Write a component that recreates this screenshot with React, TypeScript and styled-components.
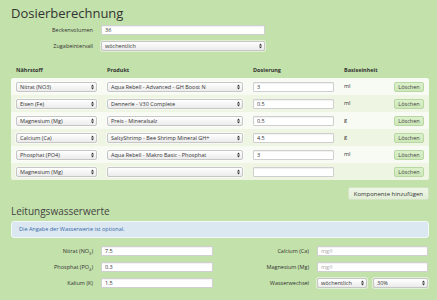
import React from "react";
import styled, { createGlobalStyle } from "styled-components";

const Global = createGlobalStyle`
  html, body { margin: 0; padding: 0; background: #c3e1ab; }
  body { font-family: "Open Sans", "DejaVu Sans", sans-serif; color: #333; font-size: 6px; line-height: 1.2; }
  * { box-sizing: border-box; }
`;

const Page = styled.div`
  width: 437px;
  height: 300px;
  padding: 4px 8px 0 11px;
  background: #c3e1ab;
  overflow: hidden;
`;

const Title = styled.h1`
  margin: 0 0 2px 0;
  font-size: 13px;
  font-weight: 400;
  line-height: 19px;
  color: #333;
`;

const FormGrid = styled.div`
  display: grid;
  grid-template-columns: 82px 164px;
  grid-auto-rows: 10px;
  column-gap: 8px;
  row-gap: 6px;
  align-items: center;
`;

const Label = styled.label`
  font-size: 5.5px;
  line-height: 7px;
  color: #333;
  text-align: right;
`;

const Input = styled.input<{ $w?: number }>`
  display: block;
  height: 10px;
  width: ${(p) => (p.$w ? `${p.$w}px` : "100%")};
  border: 1px solid #cfcfcf;
  border-radius: 1px;
  background: #fff;
  box-shadow: inset 0 1px 1px rgba(0, 0, 0, 0.06);
  font-family: inherit;
  font-size: 5.5px;
  color: #333;
  padding: 0 3px;
  margin: 0;
  outline: none;
  &::placeholder { color: #aaa; }
`;

const SelectWrap = styled.div<{ $w?: number }>`
  position: relative;
  width: ${(p) => (p.$w ? `${p.$w}px` : "100%")};
  height: 10px;
`;

const SelectBox = styled.select`
  display: block;
  appearance: none;
  -webkit-appearance: none;
  width: 100%;
  height: 10px;
  margin: 0;
  border: 1px solid #c6c6c6;
  border-radius: 2px;
  background: linear-gradient(#ffffff, #ebebeb);
  box-shadow: 0 0 0 1px rgba(255, 255, 255, 0.5);
  font-family: inherit;
  font-size: 5.5px;
  color: #333;
  padding: 0 3px;
  line-height: 8px;
  outline: none;
`;

const Arrows = styled.svg`
  position: absolute;
  right: 3px;
  top: 2px;
  width: 3px;
  height: 6px;
  pointer-events: none;
`;

function Select({ value, w }: { value: string; w?: number }) {
  return (
    <SelectWrap $w={w}>
      <SelectBox defaultValue={value}>
        <option value={value}>{value}</option>
      </SelectBox>
      <Arrows viewBox="0 0 3 6">
        <path d="M0 2.4 L1.5 0.4 L3 2.4 Z M0 3.6 L1.5 5.6 L3 3.6 Z" fill="#333" />
      </Arrows>
    </SelectWrap>
  );
}

const TableHead = styled.div`
  display: grid;
  grid-template-columns: 81px 136px 81px 40px 30px;
  column-gap: 10px;
  padding: 0 5px;
  margin-top: 15px;
  height: 9px;
  align-items: center;
  font-size: 5.5px;
  font-weight: 700;
  color: #333;
`;

const Panel = styled.div`
  margin-top: 3px;
  width: 418px;
  background: #f8fbf3;
  border-radius: 3px;
  overflow: hidden;
`;

const Row = styled.div<{ $alt?: boolean }>`
  display: grid;
  grid-template-columns: 81px 136px 81px 40px 30px;
  column-gap: 10px;
  padding: 0 5px;
  height: 17px;
  align-items: center;
  background: ${(p) => (p.$alt ? "#eef5e3" : "#f8fbf3")};
`;

const Unit = styled.span`
  font-size: 5.5px;
  color: #333;
`;

const SmallButton = styled.button`
  display: block;
  height: 10px;
  width: 30px;
  padding: 0;
  border: 1px solid #b9d7a3;
  border-radius: 2px;
  background: linear-gradient(#dcf1cc, #cde8b8);
  font-family: inherit;
  font-size: 5.5px;
  color: #444;
`;

const Actions = styled.div`
  display: flex;
  justify-content: flex-end;
  width: 418px;
  margin-top: 7px;
`;

const AddButton = styled.button`
  display: block;
  height: 13px;
  padding: 0 5px;
  border: 1px solid #d3e4c5;
  border-radius: 2px;
  background: linear-gradient(#eef6e6, #e2eed7);
  font-family: inherit;
  font-size: 6px;
  color: #333;
`;

const SubTitle = styled.h2`
  margin: 5px 0 0 0;
  font-size: 10px;
  line-height: 13px;
  font-weight: 400;
  color: #444;
`;

const Info = styled.div`
  margin-top: 3px;
  width: 418px;
  height: 17px;
  display: flex;
  align-items: center;
  padding: 0 7px;
  background: #dce8f1;
  border: 1px solid #f2f7f8;
  border-radius: 3px;
  font-size: 5.5px;
  color: #3869a6;
`;

const WaterGrid = styled.div`
  margin-top: 8px;
  display: grid;
  grid-template-columns: 82px 112px 88px 111px;
  grid-auto-rows: 10px;
  column-gap: 8px;
  row-gap: 6px;
  align-items: center;
`;

const Split = styled.div`
  display: flex;
  gap: 6px;
`;

const Sub = styled.sub`
  font-size: 4px;
  line-height: 0;
`;

const rows = [
  { n: "Nitrat (NO3)", p: "Aqua Rebell - Advanced - GH Boost N", d: "3", u: "ml" },
  { n: "Eisen (Fe)", p: "Dennerle - V30 Complete", d: "0.5", u: "ml" },
  { n: "Magnesium (Mg)", p: "Preis - Mineralsalz", d: "0.5", u: "g" },
  { n: "Calcium (Ca)", p: "SaltyShrimp - Bee Shrimp Mineral GH+", d: "4.5", u: "g" },
  { n: "Phosphat (PO4)", p: "Aqua Rebell - Makro Basic - Phosphat", d: "3", u: "ml" },
  { n: "Magnesium (Mg)", p: "", d: "", u: "" },
];

export default function App() {
  return (
    <Page>
      <Global />
      <Title>Dosierberechnung</Title>
      <FormGrid>
        <Label>Beckenvolumen</Label>
        <Input defaultValue="36" />
        <Label>Zugabeintervall</Label>
        <Select value="wöchentlich" />
      </FormGrid>
      <TableHead>
        <span>Nährstoff</span>
        <span>Produkt</span>
        <span>Dosierung</span>
        <span>Basiseinheit</span>
        <span />
      </TableHead>
      <Panel>
        {rows.map((r, i) => (
          <Row key={i} $alt={i % 2 === 1}>
            <Select value={r.n} />
            <Select value={r.p} />
            <Input defaultValue={r.d} />
            <Unit>{r.u}</Unit>
            <SmallButton>Löschen</SmallButton>
          </Row>
        ))}
      </Panel>
      <Actions>
        <AddButton>Komponente hinzufügen</AddButton>
      </Actions>
      <SubTitle>Leitungswasserwerte</SubTitle>
      <Info>Die Angabe der Wasserwerte ist optional.</Info>
      <WaterGrid>
        <Label>
          Nitrat (NO<Sub>3</Sub>)
        </Label>
        <Input defaultValue="7.5" />
        <Label>Calcium (Ca)</Label>
        <Input placeholder="mg/l" />
        <Label>
          Phosphat (PO<Sub>4</Sub>)
        </Label>
        <Input defaultValue="0.3" />
        <Label>Magnesium (Mg)</Label>
        <Input placeholder="mg/l" />
        <Label>Kalium (K)</Label>
        <Input defaultValue="1.5" />
        <Label>Wasserwechsel</Label>
        <Split>
          <Select value="wöchentlich" w={50} />
          <Select value="30%" w={55} />
        </Split>
      </WaterGrid>
    </Page>
  );
}
